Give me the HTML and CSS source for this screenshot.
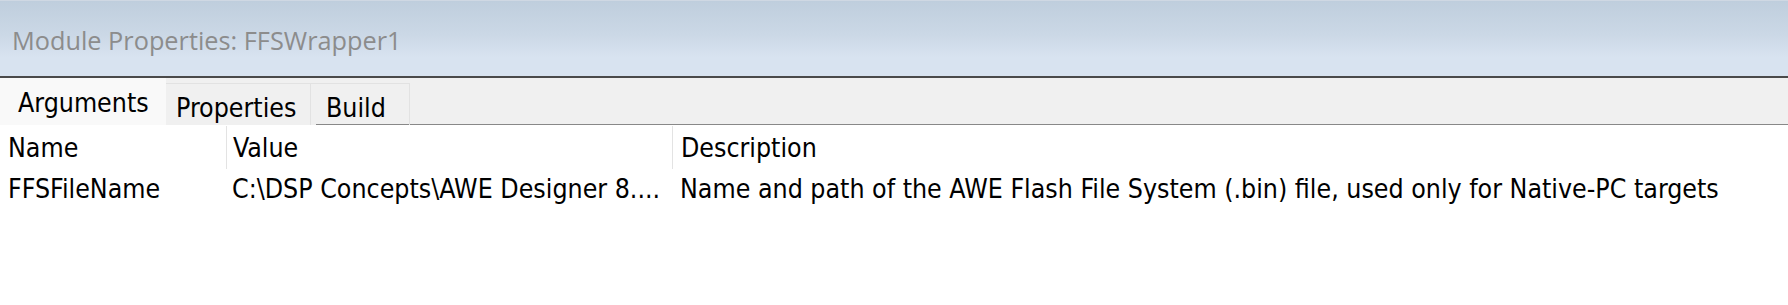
FILE: index.html
```html
<!DOCTYPE html>
<html>
<head>
<meta charset="utf-8">
<link rel="stylesheet" href="styles.css">
</head>
<body>
<div class="window">
  <div class="titlebar"><span class="title">Module Properties: FFSWrapper1</span></div>
  <div class="tabstrip">
    <div class="tab active">Arguments</div>
    <div class="tab props">Properties</div>
    <div class="tab build">Build</div>
    <div class="tabfill"></div>
  </div>
  <div class="table">
    <div class="row head">
      <div class="cell c-name">Name</div>
      <div class="cell c-value sep">Value</div>
      <div class="cell c-desc sep">Description</div>
    </div>
    <div class="row data">
      <div class="cell c-name">FFSFileName</div>
      <div class="cell c-value">C:\DSP Concepts\AWE Designer 8....</div>
      <div class="cell c-desc">Name and path of the AWE Flash File System (.bin) file, used only for Native-PC targets</div>
    </div>
  </div>
</div>
</body>
</html>
```
FILE: styles.css
```css
html, body {
  margin: 0;
  padding: 0;
  background: #ffffff;
}
.window {
  width: 1788px;
  height: 305px;
  font-family: "DejaVu Sans Condensed", "DejaVu Sans", sans-serif;
  color: #000;
  overflow: hidden;
}
.titlebar {
  box-sizing: border-box;
  height: 78px;
  border-top: 1px solid #cfd8e3;
  border-bottom: 2px solid #4a4a4a;
  background: linear-gradient(#bfcedd 0%, #cbd8e6 45%, #d8e3f0 75%, #d8e3f0 100%);
  display: flex;
  align-items: center;
  padding-left: 12px;
}
.title {
  font-family: "Open Sans", sans-serif;
  font-size: 25.3px;
  color: #8c8c8c;
  margin-top: 3px;
}
.tabstrip {
  display: flex;
  align-items: flex-end;
  height: 47px;
  background: #f0f0f0;
  font-size: 26.5px;
  line-height: 30px;
}
.tab {
  box-sizing: border-box;
  height: 42px;
  border: 1px solid #e2e2e2;
  border-bottom: none;
  background: #f0f0f0;
  padding-top: 9px;
  white-space: nowrap;
}
.tab.active {
  width: 166px;
  height: 47px;
  background: #f9f9f9;
  border: none;
  padding-left: 18px;
  padding-top: 10px;
}
.tab.props {
  width: 145px;
  padding-left: 10px;
  border-left: none;
}
.tab.build {
  width: 99px;
  padding-left: 15px;
  border-left: none;
  background: linear-gradient(#888888, #888888) no-repeat 5px 100% / calc(100% - 5px) 1px, #f0f0f0;
}
.tabfill {
  flex: 1;
  height: 1px;
  background: #888888;
}
.table {
  font-size: 26.5px;
  line-height: 30px;
}
.row {
  display: flex;
}
.row.head {
  height: 46px;
}
.row.head .cell {
  margin-top: 1px;
  height: 43px;
  padding-top: 7px;
}
.row.data .cell {
  padding-top: 3px;
}
.cell {
  box-sizing: border-box;
  white-space: nowrap;
}
.c-name {
  width: 226px;
  padding-left: 8px;
}
.c-value {
  width: 446px;
  padding-left: 6px;
}
.c-desc {
  flex: 1;
  padding-left: 8px;
}
.sep {
  border-left: 1px solid #e3e3e3;
}
```
